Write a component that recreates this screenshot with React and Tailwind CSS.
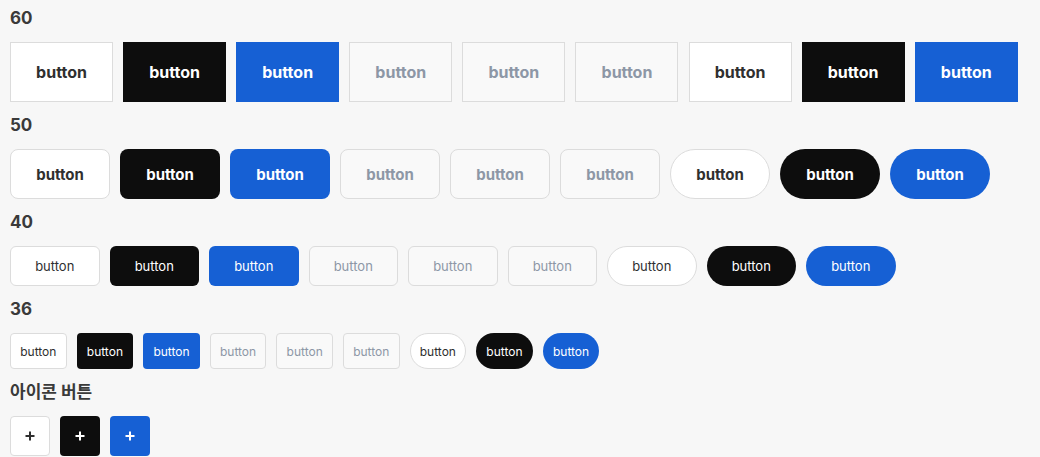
import React from 'react';

const FONT = { fontFamily: 'Inter, "Noto Sans CJK KR", sans-serif' };

// full class strings per size
const SIZES = {
  60: 'h-[60px] w-[103px] text-[16px] font-bold',
  50: 'h-[50px] w-[100px] text-[15px] font-bold pt-[2px]',
  40: 'h-[40px] w-[89.5px] text-[13px] font-normal pt-[2px]',
  36: 'h-[36px] w-[56.6px] text-[12px] font-normal pt-px',
};

const RADIUS = {
  60: 'rounded-none',
  50: 'rounded-lg',
  40: 'rounded-md',
  36: 'rounded',
};

const VARIANTS = {
  white: 'bg-white border border-[#dcdcdc] text-[#2f2f2f]',
  black: 'bg-[#0d0d0d] text-white',
  blue: 'bg-[#1660d4] text-white',
  gray: 'bg-[#f9f9f9] border border-[#dcdcdc] text-[#8d97a6]',
};

const ROW = ['white', 'black', 'blue', 'gray', 'gray', 'gray', 'white', 'black', 'blue'];

function Btn({ size, variant, pill }) {
  const radius = pill && size !== 60 ? 'rounded-full' : RADIUS[size];
  return (
    <button
      className={`flex items-center justify-center shrink-0 ${SIZES[size]} ${VARIANTS[variant]} ${radius}`}
    >
      button
    </button>
  );
}

function Section({ title, children }) {
  return (
    <div className="flex flex-col gap-3">
      <h2 className="h-6 leading-6 text-[17px] font-bold text-[#3a3a3a]">{title}</h2>
      {children}
    </div>
  );
}

function Plus() {
  return (
    <svg width="10" height="10" viewBox="0 0 10 10" fill="none" stroke="currentColor" strokeWidth="2">
      <path d="M5 0.5v9M0.5 5h9" />
    </svg>
  );
}

export default function App() {
  return (
    <div className="min-h-[457px] bg-[#f7f7f7] px-[10px] pt-[6px] flex flex-col gap-[11px]" style={FONT}>
      {[60, 50, 40, 36].map((size) => (
        <Section key={size} title={size}>
          <div className={`flex ${size === 60 ? 'gap-[10.1px]' : 'gap-[10px]'}`}>
            {ROW.map((v, i) => (
              <Btn key={i} size={size} variant={v} pill={i >= 6} />
            ))}
          </div>
        </Section>
      ))}
      <Section title="아이콘 버튼">
        <div className="flex gap-[10px]">
          <button className="w-10 h-10 rounded flex items-center justify-center bg-white border border-[#dcdcdc] text-[#2f2f2f]">
            <Plus />
          </button>
          <button className="w-10 h-10 rounded flex items-center justify-center bg-[#0d0d0d] text-white">
            <Plus />
          </button>
          <button className="w-10 h-10 rounded flex items-center justify-center bg-[#1660d4] text-white">
            <Plus />
          </button>
        </div>
      </Section>
    </div>
  );
}
